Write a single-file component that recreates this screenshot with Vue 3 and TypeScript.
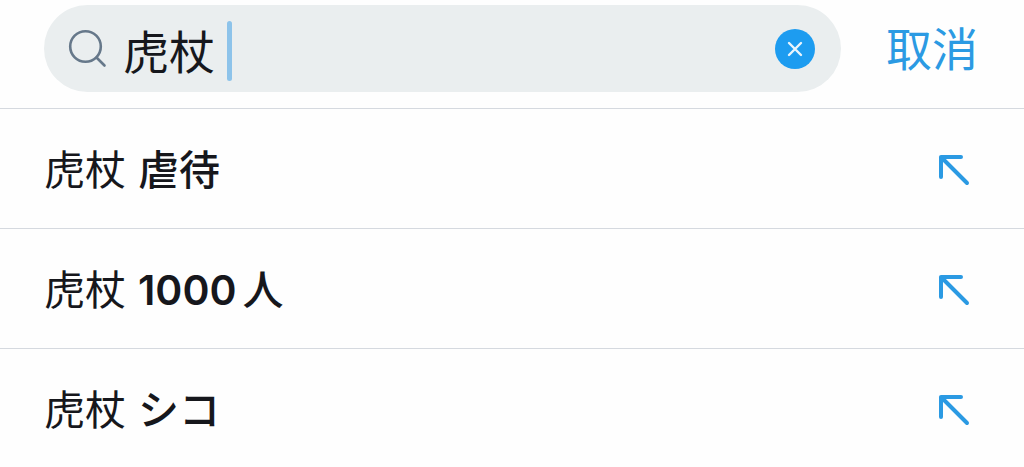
<script setup lang="ts">
import { ref } from 'vue'

interface Suggestion {
  prefix: string
  number?: string
  rest: string
}

const query = ref('虎杖')
const suggestions: Suggestion[] = [
  { prefix: '虎杖', rest: '虐待' },
  { prefix: '虎杖', number: '1000', rest: '人' },
  { prefix: '虎杖', rest: 'シコ' },
]

function choose(s: Suggestion) {
  query.value = `${s.prefix} ${s.number ?? ''}${s.rest}`
}
</script>

<template>
  <main class="page">
    <form class="header" role="search" @submit.prevent>
      <div class="field">
        <svg class="search-icon" viewBox="0 0 40 40" aria-hidden="true">
          <circle cx="17.5" cy="17.5" r="15.3" />
          <path d="M28.5 28.5 L36.5 36.5" />
        </svg>
        <div class="entry">
          <input v-model="query" class="input" type="text" aria-label="検索" />
          <span class="caret" :style="{ left: `calc(${query.length}em + 12px)` }"></span>
        </div>
        <button class="clear" type="button" aria-label="クリア" @click="query = ''">
          <svg viewBox="0 0 40 40" aria-hidden="true">
            <path d="M14 14 L26 26 M26 14 L14 26" />
          </svg>
        </button>
      </div>
      <button class="cancel" type="button">取消</button>
    </form>

    <ul class="list">
      <li v-for="s in suggestions" :key="s.rest" class="item">
        <button class="row" type="button" @click="choose(s)">
          <span class="label">
            <span>{{ s.prefix }}</span>
            <span class="strong"><span v-if="s.number" class="number">{{ s.number }}</span><span>{{ s.rest }}</span></span>
          </span>
          <svg class="arrow" viewBox="0 0 32 32" aria-hidden="true">
            <path d="M3 23 V3 H23 M3 3 L29 29" />
          </svg>
        </button>
      </li>
    </ul>
  </main>
</template>

<style>
body {
  margin: 0;
  background: #fefefe;
}
</style>

<style scoped>
.page {
  font-family: 'Noto Sans CJK JP', 'Liberation Sans', sans-serif;
  color: #16171c;
  overflow: hidden;
}

button,
input {
  margin: 0;
  padding: 0;
  border: 0;
  background: none;
  color: inherit;
  font: inherit;
}

button {
  cursor: pointer;
}

.header {
  display: flex;
  align-items: center;
  gap: 45px;
  padding: 5px 46px 16px 44px;
  border-bottom: 1px solid #d5d9df;
}

.field {
  display: flex;
  flex: 1;
  align-items: center;
  min-width: 0;
  height: 87px;
  box-sizing: border-box;
  padding: 0 26px 0 24px;
  border-radius: 44px;
  background: #eaeeef;
}

.search-icon {
  flex: none;
  width: 40px;
  height: 40px;
  fill: none;
  stroke: #66788a;
  stroke-width: 2.6;
  stroke-linecap: round;
}

.entry {
  position: relative;
  flex: 1;
  min-width: 0;
  margin-left: 15px;
  font-size: 46px;
}

.input {
  display: block;
  width: 100%;
  height: 66px;
  line-height: 66px;
  outline: none;
  caret-color: transparent;
}

.caret {
  position: absolute;
  top: 5px;
  width: 5px;
  height: 60px;
  border-radius: 3px;
  background: #8dc3ea;
}

.clear {
  flex: none;
  width: 40px;
  height: 40px;
  border-radius: 50%;
  background: #1d9cf0;
}

.clear svg {
  display: block;
  width: 40px;
  height: 40px;
  fill: none;
  stroke: #eaf5fc;
  stroke-width: 2.4;
  stroke-linecap: round;
}

.cancel {
  flex: none;
  padding-bottom: 6px;
  color: #2b9ae3;
  font-family: 'Noto Sans CJK SC', sans-serif;
  font-size: 46px;
  line-height: 80px;
}

.list {
  margin: 0;
  padding: 0;
  list-style: none;
}

.item {
  border-bottom: 1px solid #d5d9df;
}

.item:last-child {
  border-bottom: 0;
}

.row {
  display: flex;
  align-items: center;
  justify-content: space-between;
  width: 100%;
  height: 119px;
  padding: 0 54px 0 44px;
  text-align: left;
}

.label {
  display: flex;
  gap: 12px;
  padding-bottom: 4px;
  font-size: 41px;
  line-height: 60px;
}

.strong {
  font-weight: 500;
}

.number {
  margin-right: 6px;
  font-family: Inter, 'Liberation Sans', sans-serif;
  font-weight: 600;
  line-height: 1;
}

.arrow {
  flex: none;
  width: 32px;
  height: 32px;
  padding-top: 2px;
  fill: none;
  stroke: #2b9ae3;
  stroke-width: 4;
  stroke-linecap: round;
  stroke-linejoin: round;
}
</style>
